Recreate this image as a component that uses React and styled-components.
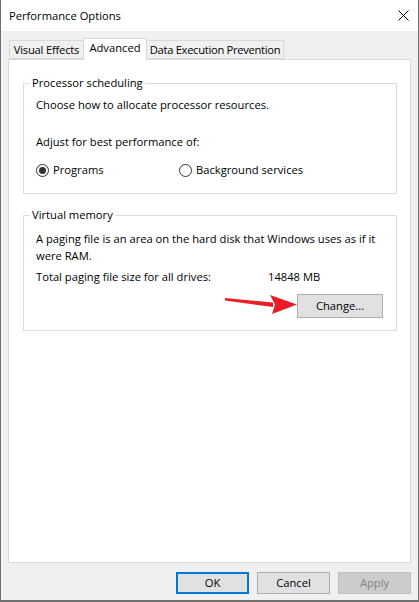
import React from 'react';
import styled, { createGlobalStyle } from 'styled-components';

const GlobalStyle = createGlobalStyle`
  html, body { margin: 0; padding: 0; background: #ffffff; }
  body {
    font-family: "Open Sans", "Noto Sans", sans-serif;
    font-size: 11.2px;
    color: #000000;
  }
  * { box-sizing: border-box; }
`;

const Window = styled.div`
  width: 419px;
  height: 602px;
  display: flex;
  flex-direction: column;
  background: #f0f0f0;
  border-left: 1px solid #707070;
  border-right: 1px solid #707070;
  border-bottom: 2px solid #707070;
`;

const TitleBar = styled.div`
  height: 31px;
  flex: none;
  background: #ffffff;
  display: flex;
  align-items: center;
  justify-content: space-between;
  padding: 0 9px 0 8px;
`;

const Title = styled.span`
  line-height: 16px;
  padding-top: 1px;
`;

const CloseIcon = styled.svg`
  width: 11px;
  height: 11px;
  display: block;
`;

const Body = styled.div`
  flex: 1;
  display: flex;
  flex-direction: column;
  padding: 7px 7px 0 7px;
  min-height: 0;
`;

const TabStrip = styled.div`
  height: 21px;
  display: flex;
  align-items: flex-end;
  padding-left: 1px;
  flex: none;
`;

const Tab = styled.div`
  width: ${p => p.$w}px;
  height: ${p => (p.$active ? 22 : 19)}px;
  margin-bottom: ${p => (p.$active ? -1 : 0)}px;
  margin-left: -1px;
  &:first-child { margin-left: 0; }
  position: relative;
  z-index: ${p => (p.$active ? 2 : 1)};
  background: ${p => (p.$active ? '#ffffff' : '#f0f0f0')};
  border: 1px solid #d9d9d9;
  border-bottom: ${p => (p.$active ? 'none' : '1px solid #d9d9d9')};
  display: flex;
  align-items: center;
  justify-content: center;
  padding-bottom: ${p => (p.$active ? 3 : 0)}px;
  line-height: 16px;
  letter-spacing: ${p => p.$ls || 0}px;
  white-space: nowrap;
`;

const Panel = styled.div`
  flex: 1;
  background: #ffffff;
  border: 1px solid #d9d9d9;
  padding: 15px 13px 0 14px;
  display: flex;
  flex-direction: column;
  gap: 13px;
`;

const Group = styled.fieldset`
  margin: 0;
  min-width: 0;
  border: 1px solid #dcdcdc;
  padding: 0 13px ${p => p.$pb}px 12px;
`;

const Legend = styled.legend`
  margin-left: -6px;
  padding: 0 2px;
  line-height: 16px;
`;

const Line = styled.div`
  margin-top: ${p => p.$mt}px;
  line-height: ${p => p.$lh || 16}px;
  white-space: nowrap;
`;

const RadioRow = styled.div`
  margin-top: 12px;
  height: 16px;
  display: grid;
  grid-template-columns: 143px 1fr;
  align-items: center;
`;

const RadioLabel = styled.label`
  display: flex;
  align-items: center;
  gap: 4px;
  line-height: 16px;
  white-space: nowrap;
`;

const RadioCircle = styled.span`
  width: 13px;
  height: 13px;
  border-radius: 50%;
  border: 1px solid #333333;
  background: #ffffff;
  display: inline-flex;
  align-items: center;
  justify-content: center;
  flex: none;
`;

const RadioDot = styled.span`
  width: 7px;
  height: 7px;
  border-radius: 50%;
  background: #333333;
`;

const InfoRow = styled.div`
  margin-top: 5px;
  display: flex;
  line-height: 16px;
  white-space: nowrap;
`;

const InfoLabel = styled.span`
  width: 232px;
`;

const ButtonRow = styled.div`
  margin-top: 9px;
  display: flex;
  justify-content: flex-end;
  position: relative;
`;

const Button = styled.button`
  font: inherit;
  color: ${p => (p.$disabled ? '#838383' : '#000000')};
  width: ${p => p.$w}px;
  height: ${p => p.$h}px;
  padding: 0;
  margin: 0;
  background: ${p => (p.$disabled ? '#cccccc' : '#e1e1e1')};
  border: ${p =>
    p.$default ? '2px solid #0078d7' : p.$disabled ? '1px solid #bfbfbf' : '1px solid #adadad'};
  line-height: 16px;
  display: flex;
  align-items: center;
  justify-content: center;
`;

const Arrow = styled.svg`
  position: absolute;
  right: 85px;
  top: 0;
  width: 74px;
  height: 22px;
  overflow: visible;
`;

const Footer = styled.div`
  flex: none;
  display: flex;
  justify-content: flex-end;
  gap: 8px;
  padding: 9px 7px 6px 0;
`;

function Radio({ checked, children }) {
  return (
    <RadioLabel>
      <RadioCircle>{checked && <RadioDot />}</RadioCircle>
      <span>{children}</span>
    </RadioLabel>
  );
}

export default function App() {
  return (
    <>
      <GlobalStyle />
      <Window>
        <TitleBar>
          <Title>Performance Options</Title>
          <CloseIcon viewBox="0 0 11 11">
            <path d="M0.5 0.5 L10.5 10.5 M10.5 0.5 L0.5 10.5" stroke="#000" strokeWidth="1" fill="none" />
          </CloseIcon>
        </TitleBar>
        <Body>
          <TabStrip>
            <Tab $w={75} $ls={-0.2}>Visual Effects</Tab>
            <Tab $w={64} $active>Advanced</Tab>
            <Tab $w={138} $ls={-0.3}>Data Execution Prevention</Tab>
          </TabStrip>
          <Panel>
            <Group $pb={15}>
              <Legend>Processor scheduling</Legend>
              <Line $mt={6}>Choose how to allocate processor resources.</Line>
              <Line $mt={21}>Adjust for best performance of:</Line>
              <RadioRow>
                <Radio checked>Programs</Radio>
                <Radio>Background services</Radio>
              </RadioRow>
            </Group>
            <Group $pb={12}>
              <Legend>Virtual memory</Legend>
              <Line $mt={7} $lh={17}>
                A paging file is an area on the hard disk that Windows uses as if it
                <br />
                were RAM.
              </Line>
              <InfoRow>
                <InfoLabel>Total paging file size for all drives:</InfoLabel>
                <span>14848 MB</span>
              </InfoRow>
              <ButtonRow>
                <Arrow viewBox="0 0 74 22">
                  <polygon points="1,4 49,8.5 49,13 1,6.5" fill="#ec1c24" />
                  <polygon points="46,1 73,10.5 48,20 51,10.5" fill="#ec1c24" />
                </Arrow>
                <Button $w={86} $h={24}>Change...</Button>
              </ButtonRow>
            </Group>
          </Panel>
        </Body>
        <Footer>
          <Button $w={73} $h={22} $default>OK</Button>
          <Button $w={73} $h={22}>Cancel</Button>
          <Button $w={73} $h={22} $disabled>Apply</Button>
        </Footer>
      </Window>
    </>
  );
}
